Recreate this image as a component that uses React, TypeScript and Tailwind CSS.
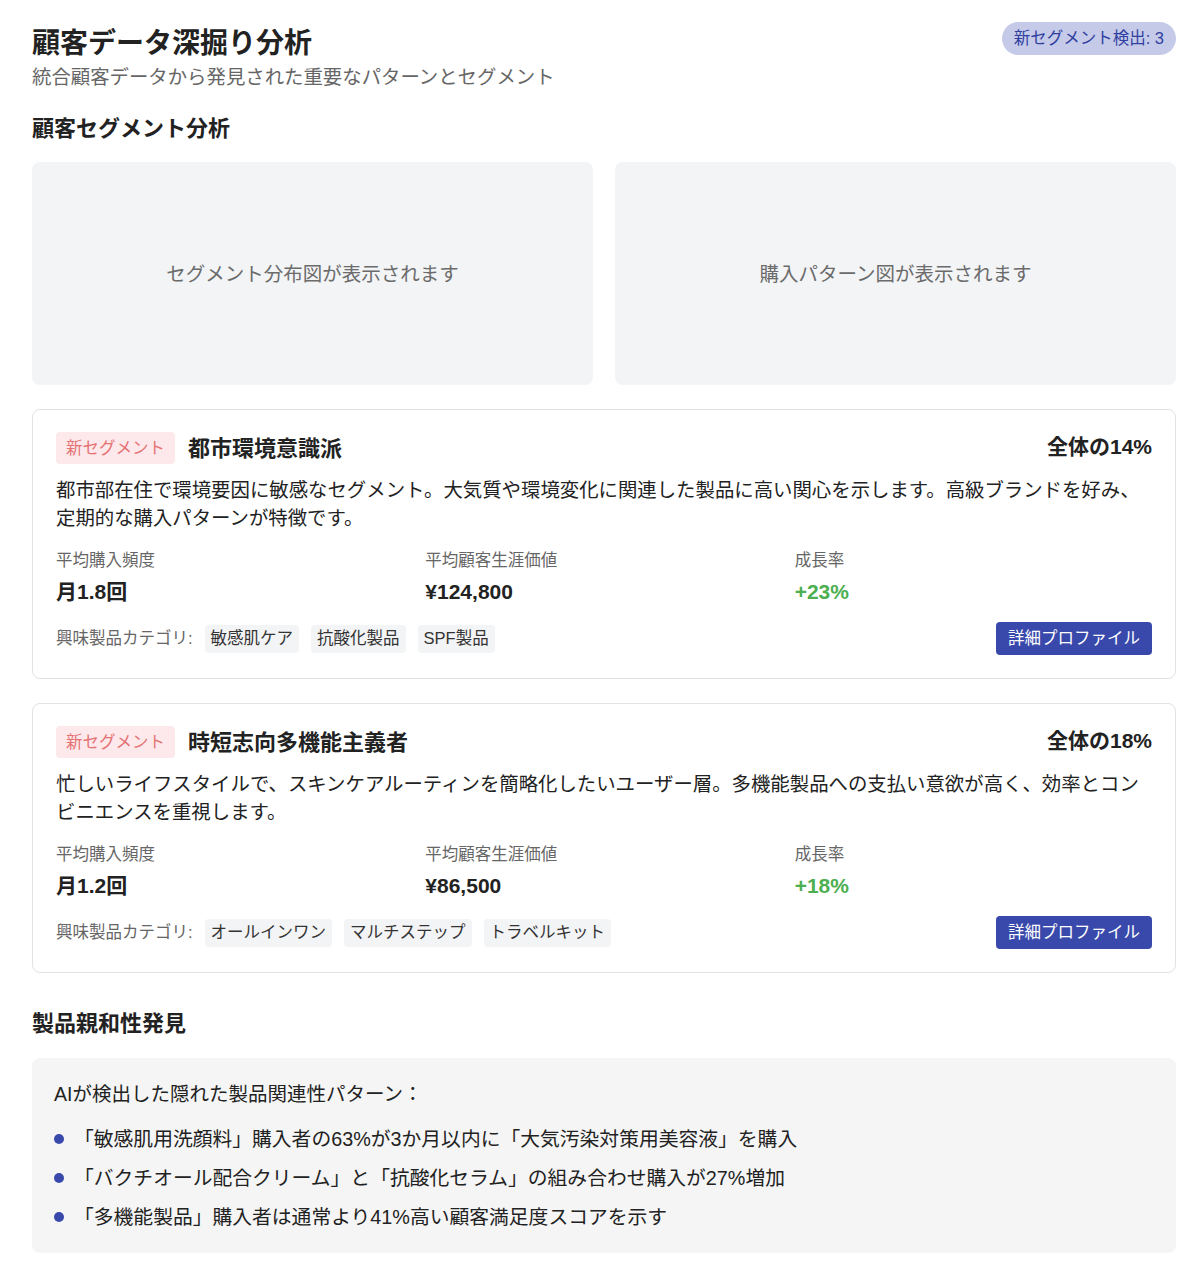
import React from "react";

type Segment = {
    name: string;
    share: string;
    description: string;
    frequency: string;
    ltv: string;
    growth: string;
    categories: string[];
};

const segments: Segment[] = [
    {
        name: "都市環境意識派",
        share: "全体の14%",
        description:
            "都市部在住で環境要因に敏感なセグメント。大気質や環境変化に関連した製品に高い関心を示します。高級ブランドを好み、定期的な購入パターンが特徴です。",
        frequency: "月1.8回",
        ltv: "¥124,800",
        growth: "+23%",
        categories: ["敏感肌ケア", "抗酸化製品", "SPF製品"],
    },
    {
        name: "時短志向多機能主義者",
        share: "全体の18%",
        description:
            "忙しいライフスタイルで、スキンケアルーティンを簡略化したいユーザー層。多機能製品への支払い意欲が高く、効率とコンビニエンスを重視します。",
        frequency: "月1.2回",
        ltv: "¥86,500",
        growth: "+18%",
        categories: ["オールインワン", "マルチステップ", "トラベルキット"],
    },
];

const affinities = [
    "「敏感肌用洗顔料」購入者の63%が3か月以内に「大気汚染対策用美容液」を購入",
    "「バクチオール配合クリーム」と「抗酸化セラム」の組み合わせ購入が27%増加",
    "「多機能製品」購入者は通常より41%高い顧客満足度スコアを示す",
];

function Stat({ label, value, accent }: { label: string; value: string; accent?: boolean }) {
    return (
        <div className="flex flex-col gap-[6px]">
            <span className="text-[16.5px] leading-[24px] text-[#666666]">{label}</span>
            <span
                className={
                    accent
                        ? "text-[21px] leading-[28px] font-bold text-[#4caf50]"
                        : "text-[21px] leading-[28px] font-bold text-[#222222]"
                }
            >
                {value}
            </span>
        </div>
    );
}

function SegmentCard({ segment }: { segment: Segment }) {
    return (
        <div className="border border-[#e3e3e3] rounded-lg px-[23px] pt-[22px] pb-[23px] bg-white">
            <div className="flex items-center justify-between h-[32px]">
                <div className="flex items-center gap-[13px]">
                    <span className="h-[32px] px-[10px] flex items-center rounded bg-[#fde8ec] text-[#e57373] text-[16.5px]">
                        新セグメント
                    </span>
                    <h3 className="text-[22px] font-bold text-[#222222] leading-[32px] pt-[2px]">{segment.name}</h3>
                </div>
                <span className="text-[21px] font-bold text-[#222222] -mt-[2px]">{segment.share}</span>
            </div>

            <p className="mt-[12px] text-[19.4px] leading-[28px] text-[#222222]">{segment.description}</p>

            <div className="grid grid-cols-3 gap-3 mt-[16px]">
                <Stat label="平均購入頻度" value={segment.frequency} />
                <Stat label="平均顧客生涯価値" value={segment.ltv} />
                <Stat label="成長率" value={segment.growth} accent />
            </div>

            <div className="flex items-center justify-between mt-[16px]">
                <div className="flex items-center gap-3">
                    <span className="text-[16.5px] text-[#666666]">興味製品カテゴリ:</span>
                    {segment.categories.map((cat) => (
                        <span
                            key={cat}
                            className="h-[28px] px-[6px] flex items-center rounded bg-[#f3f4f6] text-[16.5px] text-[#333333]"
                        >
                            {cat}
                        </span>
                    ))}
                </div>
                <button className="h-[33px] px-[12px] rounded bg-[#3949ab] text-white text-[16.5px]">
                    詳細プロファイル
                </button>
            </div>
        </div>
    );
}

function ChartPlaceholder({ text }: { text: string }) {
    return (
        <div className="h-[223px] rounded-lg bg-[#f3f4f6] flex items-center justify-center">
            <span className="text-[19.5px] text-[#6b6b6b] pt-[3px]">{text}</span>
        </div>
    );
}

export default function App() {
    return (
        <div
            className="min-h-[1278px] bg-white pl-8 pr-6 pt-[22px] pb-6 text-[#222222]"
            style={{ fontFamily: '"Liberation Sans", "Noto Sans CJK JP", sans-serif' }}
        >
            <div className="flex items-start justify-between">
                <div className="pt-[4px]">
                    <h1 className="text-[28px] leading-[36px] font-bold text-[#222222]">顧客データ深掘り分析</h1>
                    <p className="mt-[1px] text-[19.4px] leading-[28px] text-[#666666]">
                        統合顧客データから発見された重要なパターンとセグメント
                    </p>
                </div>
                <span className="h-[33px] px-[12px] flex items-center rounded-full bg-[#c5cae9] text-[#303f9f] text-[16.5px]">
                    新セグメント検出: 3
                </span>
            </div>

            <h2 className="mt-[23px] mb-[18px] text-[22px] leading-[30px] font-bold">顧客セグメント分析</h2>

            <div className="grid grid-cols-2 gap-[22px]">
                <ChartPlaceholder text="セグメント分布図が表示されます" />
                <ChartPlaceholder text="購入パターン図が表示されます" />
            </div>

            <div className="flex flex-col gap-6 mt-6">
                {segments.map((s) => (
                    <SegmentCard key={s.name} segment={s} />
                ))}
            </div>

            <h2 className="mt-[36px] mb-[19px] text-[22px] leading-[30px] font-bold">製品親和性発見</h2>

            <div className="rounded-lg bg-[#f5f5f5] px-[22px] py-[22px]">
                <p className="text-[19.5px] leading-[28px] text-[#222222]">AIが検出した隠れた製品関連性パターン：</p>
                <ul className="mt-[17px] flex flex-col gap-[11px]">
                    {affinities.map((item) => (
                        <li key={item} className="flex items-center text-[19.8px] leading-[28px]">
                            <span className="w-[10px] h-[10px] rounded-full bg-[#3949ab] mr-[10px] shrink-0" />
                            <span>{item}</span>
                        </li>
                    ))}
                </ul>
            </div>
        </div>
    );
}
